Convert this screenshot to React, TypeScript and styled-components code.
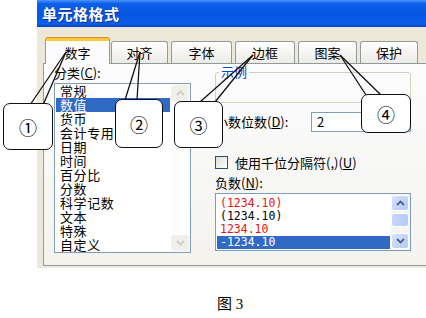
import styled, { createGlobalStyle } from 'styled-components';

const GlobalStyle = createGlobalStyle`
  html, body {
    margin: 0;
    padding: 0;
    background: #fff;
  }
  body {
    font-family: "Noto Sans CJK SC", "Liberation Sans", sans-serif;
    color: #000;
  }
`;

const Page = styled.div`
  position: relative;
  width: 426px;
  height: 318px;
  overflow: hidden;
  background: #fff;
`;

const Dialog = styled.div`
  margin-left: 37px;
  width: 400px;
  height: 268px;
  background: #ece9d8;
  display: flex;
  flex-direction: column;
`;

const TitleBar = styled.div`
  height: 27px;
  padding-left: 5px;
  display: flex;
  align-items: center;
  color: #fff;
  font-size: 15px;
  font-weight: bold;
  letter-spacing: 0.5px;
  text-shadow: 1px 1px 0 #0b2f9a;
  background: linear-gradient(#4a94f8 0%, #0c5de8 14%, #0656e2 55%, #0a5ee9 88%, #0343c8 100%);
`;

const Body = styled.div`
  padding: 11px 0 0 6px;
`;

const TabRow = styled.div`
  display: flex;
  align-items: flex-end;
  gap: 3px;
  height: 25px;
  padding-left: 2px;
`;

const Tab = styled.div<{ $w: number; $active?: boolean }>`
  width: ${(p) => p.$w}px;
  height: 22px;
  box-sizing: border-box;
  display: flex;
  align-items: center;
  justify-content: center;
  font-size: 13px;
  border: 1px solid #919b9c;
  border-bottom: none;
  border-radius: 3px 3px 0 0;
  background: ${(p) => (p.$active ? '#fcfcfe' : 'linear-gradient(#ffffff, #ecebe6)')};
  ${(p) =>
    p.$active &&
    `
    border-top: 3px solid #ffc83c;
    box-shadow: inset 0 1px 0 #fff, 0 -1px 0 #e68b2c;
    position: relative;
    z-index: 1;
    height: 26px;
    margin-bottom: -1px;
    margin-right: -2px;
  `}
`;

const Panel = styled.div`
  height: 203px;
  box-sizing: border-box;
  border: 1px solid #919b9c;
  background: linear-gradient(#fcfcfe, #f4f3ee);
  display: flex;
  gap: 24px;
  padding-left: 10px;
`;

const LeftCol = styled.div`
  width: 137px;
  display: flex;
  flex-direction: column;
`;

const RightCol = styled.div`
  width: 196px;
  display: flex;
  flex-direction: column;
  padding-top: 1px;
`;

const FieldLabel = styled.div`
  font-size: 13px;
  line-height: 14px;
  margin-top: 2px;
  white-space: nowrap;
`;

const ListBox = styled.div<{ $h: number }>`
  height: ${(p) => p.$h}px;
  box-sizing: border-box;
  margin-top: 3px;
  border: 1px solid #7f9db9;
  background: #fff;
  display: flex;
`;

const Items = styled.div<{ $pt: number }>`
  flex: 1;
  padding: ${(p) => p.$pt}px 1px 0 1px;
`;

const CatItem = styled.div<{ $sel?: boolean }>`
  height: 14px;
  line-height: 14px;
  font-size: 13px;
  letter-spacing: 0.6px;
  padding-left: 4px;
  white-space: nowrap;
  background: ${(p) => (p.$sel ? '#316ac5' : 'transparent')};
  color: ${(p) => (p.$sel ? '#fff' : '#000')};
`;

const NegItem = styled.div<{ $sel?: boolean; $red?: boolean }>`
  height: 13px;
  line-height: 13px;
  font-family: "DejaVu Sans Mono", "Liberation Mono", monospace;
  font-size: 11.5px;
  padding-left: 3px;
  background: ${(p) => (p.$sel ? '#316ac5' : 'transparent')};
  color: ${(p) => (p.$sel ? '#fff' : p.$red ? '#e81414' : '#000')};
`;

const ScrollBar = styled.div<{ $disabled?: boolean }>`
  width: 18px;
  display: flex;
  flex-direction: column;
  padding: 1px 1px 1px 0;
  background: ${(p) => (p.$disabled ? '#fdfdfb' : '#f4f4f0')};
`;

const ScrollBtn = styled.div<{ $disabled?: boolean }>`
  height: 16px;
  box-sizing: border-box;
  border: 1px solid ${(p) => (p.$disabled ? '#f2f1ea' : '#ffffff')};
  border-radius: 3px;
  display: flex;
  align-items: center;
  justify-content: center;
  background: ${(p) =>
    p.$disabled ? '#f0efea' : 'linear-gradient(135deg, #d6e3fd, #b4c8f6)'};
`;

const Thumb = styled.div`
  margin-top: 2px;
  height: 12px;
  border: 1px solid #fff;
  border-radius: 3px;
  background: linear-gradient(90deg, #c6d6fb, #b6cbf7);
`;

const Track = styled.div`
  flex: 1;
`;

const GroupBox = styled.div`
  margin-top: 7px;
  height: 31px;
  box-sizing: border-box;
  border: 1px solid #d0d0bf;
  border-radius: 3px;
  padding-left: 3px;
`;

const Legend = styled.div`
  width: fit-content;
  margin-top: -8px;
  padding: 0 2px;
  background: #fcfcfe;
  font-size: 13px;
  line-height: 14px;
  color: #0046d5;
`;

const DecimalRow = styled.div`
  margin-top: 9px;
  height: 20px;
  display: flex;
  align-items: center;
`;

const RowLabel = styled.span`
  width: 96px;
  font-size: 13px;
  line-height: 14px;
  white-space: nowrap;
`;

const TextInput = styled.div`
  width: 100px;
  height: 20px;
  box-sizing: border-box;
  border: 1px solid #7f9db9;
  background: #fff;
  padding-left: 5px;
  font-size: 13px;
  line-height: 18px;
`;

const CheckRow = styled.div`
  margin-top: 23px;
  height: 14px;
  display: flex;
  align-items: center;
  gap: 7px;
  font-size: 13px;
  white-space: nowrap;
`;

const CheckBox = styled.span`
  width: 13px;
  height: 13px;
  box-sizing: border-box;
  border: 1px solid #1c5180;
  background: linear-gradient(135deg, #dcdcd7, #ffffff);
`;

const NegLabel = styled(FieldLabel)`
  margin-top: 6px;
  line-height: 15px;
`;

const Caption = styled.div`
  margin-top: 26px;
  padding-left: 217px;
  font-family: "Liberation Serif", "Noto Sans CJK SC", serif;
  font-size: 15px;
  line-height: 20px;
`;

const Callout = styled.div<{ $x: number; $y: number; $w: number; $h: number }>`
  position: absolute;
  left: ${(p) => p.$x}px;
  top: ${(p) => p.$y}px;
  width: ${(p) => p.$w}px;
  height: ${(p) => p.$h}px;
  box-sizing: border-box;
  border: 1.5px solid #111;
  border-radius: 7px;
  background: #fff;
  display: flex;
  align-items: center;
  justify-content: center;
  font-family: "Noto Sans CJK SC", serif;
  font-size: 18px;
  z-index: 3;
`;

const Tails = styled.svg`
  position: absolute;
  left: 0;
  top: 0;
  z-index: 2;
  pointer-events: none;
`;

const Chevron = ({ up, color }: { up?: boolean; color: string }) => (
  <svg width="9" height="6" viewBox="0 0 9 6">
    <path
      d={up ? 'M1 5 L4.5 1.5 L8 5' : 'M1 1 L4.5 4.5 L8 1'}
      fill="none"
      stroke={color}
      strokeWidth="1.8"
    />
  </svg>
);

const categories = ['常规', '数值', '货币', '会计专用', '日期', '时间', '百分比', '分数', '科学记数', '文本', '特殊', '自定义'];

const negatives = [
  { text: '(1234.10)', red: true },
  { text: '(1234.10)' },
  { text: '1234.10', red: true },
  { text: '-1234.10', sel: true },
];

const tabs = [
  { label: '数字', w: 65, active: true },
  { label: '对齐', w: 57 },
  { label: '字体', w: 61 },
  { label: '边框', w: 60 },
  { label: '图案', w: 59 },
  { label: '保护', w: 58 },
];

const tails: [number, number, number, number, number, number][] = [
  [66, 52, 30, 105, 43, 105],
  [140, 52, 125, 100, 137, 100],
  [253, 55, 200, 102, 215, 102],
  [340, 55, 366, 95, 381, 95],
];

const App = () => {
  return (
    <Page>
      <GlobalStyle />
      <Dialog>
        <TitleBar>单元格格式</TitleBar>
        <Body>
          <TabRow>
            {tabs.map((t) => (
              <Tab key={t.label} $w={t.w} $active={t.active}>
                {t.label}
              </Tab>
            ))}
          </TabRow>
          <Panel>
            <LeftCol>
              <FieldLabel>
                分类(<u>C</u>):
              </FieldLabel>
              <ListBox $h={170}>
                <Items $pt={0}>
                  {categories.map((c) => (
                    <CatItem key={c} $sel={c === '数值'}>
                      {c}
                    </CatItem>
                  ))}
                </Items>
                <ScrollBar $disabled>
                  <ScrollBtn $disabled>
                    <Chevron up color="#cfcdc3" />
                  </ScrollBtn>
                  <Track />
                  <ScrollBtn $disabled>
                    <Chevron color="#cfcdc3" />
                  </ScrollBtn>
                </ScrollBar>
              </ListBox>
            </LeftCol>
            <RightCol>
              <GroupBox>
                <Legend>示例</Legend>
              </GroupBox>
              <DecimalRow>
                <RowLabel>
                  小数位数(<u>D</u>):
                </RowLabel>
                <TextInput>2</TextInput>
              </DecimalRow>
              <CheckRow>
                <CheckBox />
                <span>
                  使用千位分隔符(,)(<u>U</u>)
                </span>
              </CheckRow>
              <NegLabel>
                负数(<u>N</u>):
              </NegLabel>
              <ListBox $h={58}>
                <Items $pt={3}>
                  {negatives.map((n, i) => (
                    <NegItem key={i} $red={n.red} $sel={n.sel}>
                      {n.text}
                    </NegItem>
                  ))}
                </Items>
                <ScrollBar>
                  <ScrollBtn>
                    <Chevron up color="#4d6185" />
                  </ScrollBtn>
                  <Thumb />
                  <Track />
                  <ScrollBtn>
                    <Chevron color="#4d6185" />
                  </ScrollBtn>
                </ScrollBar>
              </ListBox>
            </RightCol>
          </Panel>
        </Body>
      </Dialog>
      <Caption>图 3</Caption>
      <Tails width="426" height="318">
        {tails.map(([tx, ty, ax, ay, bx, by], i) => (
          <g key={i} stroke="#111" strokeWidth="1.3">
            <line x1={tx} y1={ty} x2={ax} y2={ay} />
            <line x1={tx} y1={ty} x2={bx} y2={by} />
          </g>
        ))}
      </Tails>
      <Callout $x={3} $y={103} $w={50} $h={47}>
        ①
      </Callout>
      <Callout $x={115} $y={99} $w={48} $h={49}>
        ②
      </Callout>
      <Callout $x={174} $y={101} $w={49} $h={47}>
        ③
      </Callout>
      <Callout $x={361} $y={94} $w={50} $h={39}>
        ④
      </Callout>
    </Page>
  );
};

export default App;
